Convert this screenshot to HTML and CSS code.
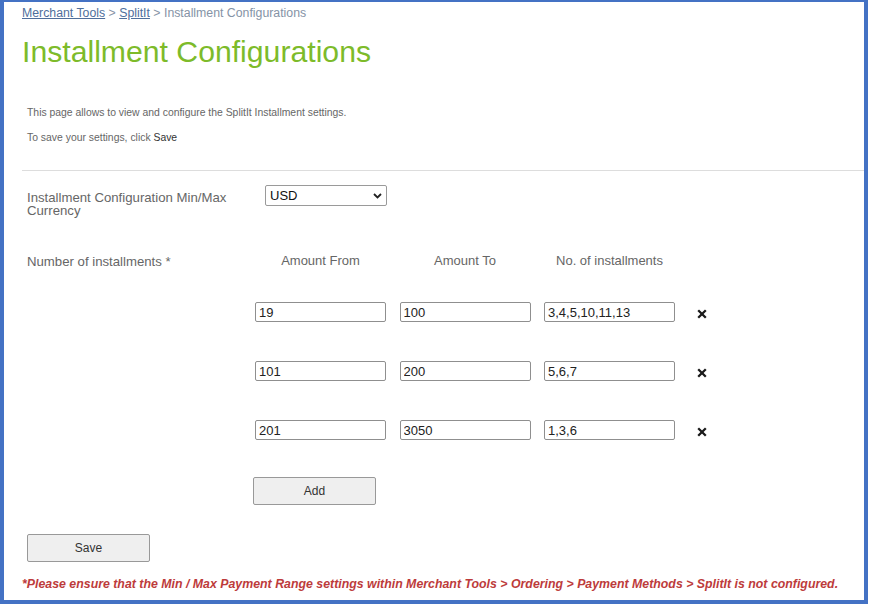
FILE: index.html
```html
<!DOCTYPE html>
<html lang="en">
<head>
<meta charset="utf-8">
<title>Installment Configurations</title>
<link rel="stylesheet" href="styles.css">
</head>
<body>
<div class="frame">
  <p class="breadcrumb"><a href="#" class="crumb-link">Merchant Tools</a> &gt; <a href="#" class="crumb-link">SplitIt</a> &gt; Installment Configurations</p>
  <h1 class="title">Installment Configurations</h1>
  <p class="intro intro-first">This page allows to view and configure the SplitIt Installment settings.</p>
  <p class="intro intro-second">To save your settings, click <span class="intro-strong">Save</span></p>
  <hr class="divider">
  <div class="form">
    <div class="currency-row">
      <label class="field-label currency-label">Installment Configuration Min/Max Currency</label>
      <div class="select-wrap">
        <select class="select">
          <option>USD</option>
        </select>
        <svg class="chevron" width="9" height="6" viewBox="0 0 9 6"><path d="M1 1 L4.5 4.5 L8 1" fill="none" stroke="#222" stroke-width="1.8"/></svg>
      </div>
    </div>

    <div class="inst-grid inst-head">
      <span class="field-label">Number of installments *</span>
      <span class="col-head">Amount From</span>
      <span class="col-head">Amount To</span>
      <span class="col-head">No. of installments</span>
    </div>

    <div class="inst-grid inst-row inst-row-first">
      <span></span>
      <input class="text-input" type="text" value="19">
      <input class="text-input" type="text" value="100">
      <input class="text-input" type="text" value="3,4,5,10,11,13">
      <svg class="remove" width="10" height="10" viewBox="0 0 10 10"><path d="M1.2 1.2 L8.8 8.8 M8.8 1.2 L1.2 8.8" stroke="#1a1a1a" stroke-width="2.3"/></svg>
    </div>
    <div class="inst-grid inst-row">
      <span></span>
      <input class="text-input" type="text" value="101">
      <input class="text-input" type="text" value="200">
      <input class="text-input" type="text" value="5,6,7">
      <svg class="remove" width="10" height="10" viewBox="0 0 10 10"><path d="M1.2 1.2 L8.8 8.8 M8.8 1.2 L1.2 8.8" stroke="#1a1a1a" stroke-width="2.3"/></svg>
    </div>
    <div class="inst-grid inst-row">
      <span></span>
      <input class="text-input" type="text" value="201">
      <input class="text-input" type="text" value="3050">
      <input class="text-input" type="text" value="1,3,6">
      <svg class="remove" width="10" height="10" viewBox="0 0 10 10"><path d="M1.2 1.2 L8.8 8.8 M8.8 1.2 L1.2 8.8" stroke="#1a1a1a" stroke-width="2.3"/></svg>
    </div>

    <div class="inst-grid add-row">
      <span></span>
      <button class="btn btn-add" type="button">Add</button>
    </div>

    <button class="btn btn-save" type="button">Save</button>
  </div>
  <p class="note">*Please ensure that the Min / Max Payment Range settings within Merchant Tools &gt; Ordering &gt; Payment Methods &gt; SplitIt is not configured.</p>
</div>
</body>
</html>
```

FILE: styles.css
```css
html, body {
  margin: 0;
  padding: 0;
  background: #ffffff;
}

body {
  font-family: "Liberation Sans", Arial, sans-serif;
  width: 870px;
  height: 606px;
  overflow: hidden;
}

.frame {
  box-sizing: border-box;
  width: 868px;
  height: 604px;
  border-style: solid;
  border-color: #4472c4;
  border-width: 2px 4px 4px 4px;
  padding-left: 18px;
}

.breadcrumb {
  margin: 0;
  padding-top: 3px;
  font-size: 12.3px;
  line-height: 16px;
  color: #8593a6;
}

.crumb-link {
  color: #4f6f9c;
  text-decoration: underline;
}

.title {
  margin: 13px 0 0 0;
  font-size: 30.2px;
  line-height: 35px;
  font-weight: normal;
  color: #7dbb2a;
}

.intro {
  margin: 0 0 0 5px;
  font-size: 10.4px;
  line-height: 14px;
  color: #666666;
}

.intro-first {
  margin-top: 37px;
}

.intro-second {
  margin-top: 11px;
}

.intro-strong {
  color: #333333;
}

.divider {
  margin: 25px 0 0 0;
  border: 0;
  border-top: 1px solid #dddddd;
  height: 0;
}

.form {
  padding-left: 5px;
}

.field-label {
  font-size: 13.2px;
  line-height: 13px;
  color: #666666;
}

.currency-row {
  display: flex;
  align-items: flex-start;
  margin-top: 14px;
}

.currency-label {
  width: 212px;
  padding-top: 6px;
  margin-right: 26px;
}

.select-wrap {
  position: relative;
  width: 122px;
  height: 21px;
}

.select {
  appearance: none;
  -webkit-appearance: none;
  box-sizing: border-box;
  width: 122px;
  height: 21px;
  margin: 0;
  padding: 0 0 0 4px;
  border: 1px solid #9a9a9a;
  border-radius: 2px;
  background: #ffffff;
  font-family: "Liberation Sans", Arial, sans-serif;
  font-size: 13px;
  color: #111111;
}

.chevron {
  position: absolute;
  right: 5px;
  top: 8px;
  pointer-events: none;
}

.inst-grid {
  display: grid;
  grid-template-columns: 214.5px 131px 131px 131px auto;
  column-gap: 13.5px;
  align-items: center;
}

.inst-head {
  margin-top: 36px;
}

.inst-head .field-label {
  line-height: 16px;
  position: relative;
  top: 1px;
}

.col-head {
  text-align: center;
  font-size: 13px;
  line-height: 16px;
  color: #666666;
}

.inst-row {
  margin-top: 39px;
}

.inst-row-first {
  margin-top: 33px;
}

.text-input {
  box-sizing: border-box;
  width: 131px;
  height: 20px;
  margin: 0;
  padding: 0 3px;
  border: 1px solid #8f8f8f;
  border-radius: 2px;
  font-family: "Liberation Sans", Arial, sans-serif;
  font-size: 13px;
  color: #222222;
  background: #ffffff;
}

.remove {
  margin-left: 8px;
  margin-top: 3px;
}

.add-row {
  margin-top: 37px;
}

.btn {
  box-sizing: border-box;
  width: 123px;
  height: 28px;
  margin: 0;
  padding: 0;
  border: 1px solid #999999;
  border-radius: 2px;
  background: #efefef;
  font-family: "Liberation Sans", Arial, sans-serif;
  font-size: 12px;
  color: #333333;
}

.btn-add {
  margin-left: -2px;
}

.btn-save {
  display: block;
  margin-top: 29px;
}

.note {
  margin: 14px 0 0 0;
  font-size: 12.35px;
  line-height: 16px;
  font-weight: bold;
  font-style: italic;
  color: #bd3b3b;
}
```
